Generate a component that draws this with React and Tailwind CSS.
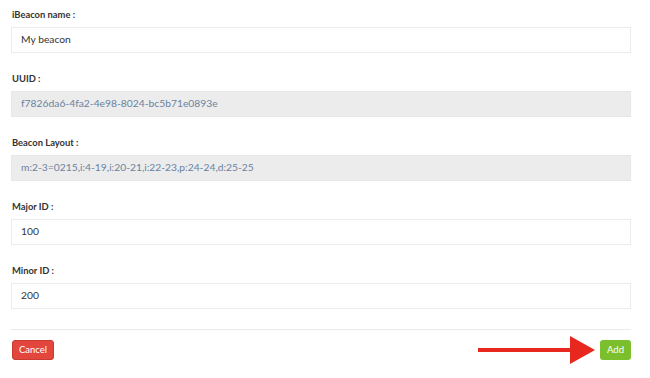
import React from "react"

const fields = [
  { label: "iBeacon name :", value: "My beacon", disabled: false },
  { label: "UUID :", value: "f7826da6-4fa2-4e98-8024-bc5b71e0893e", disabled: true },
  { label: "Beacon Layout :", value: "m:2-3=0215,i:4-19,i:20-21,i:22-23,p:24-24,d:25-25", disabled: true },
  { label: "Major ID :", value: "100", disabled: false },
  { label: "Minor ID :", value: "200", disabled: false },
]

export default function App() {
  return (
    <div className="w-[650px] h-[378px] bg-white px-[11px] font-['Lato','Open_Sans',sans-serif] overflow-hidden">
      <div className="w-[620px]">
        {fields.map((f) => (
          <div key={f.label} className="pt-[8px] mb-[11px]">
            <div className="h-[13px] leading-[13px] text-[9.4px] font-bold text-[#333] pl-px">{f.label}</div>
            <div
              className={
                "mt-[6px] h-[26px] flex items-center px-[9px] text-[10.3px] border " +
                (f.disabled
                  ? "bg-[#ececec] border-[#e6e6e6] text-[#6a82a0]"
                  : "bg-white border-[#ececec] text-[#333]")
              }
            >
              {f.value}
            </div>
          </div>
        ))}

        {/* footer */}
        <div className="mt-[20px] border-t border-[#ebebeb]" />
        <div className="mt-[5px] flex items-center justify-between">
          <button className="ml-px h-[20px] px-[6px] rounded-[3px] bg-[#e2463d] border border-[#c93a32] text-white text-[9.5px] leading-none">
            Cancel
          </button>
          <div className="flex items-center">
            <svg width="120" height="30" viewBox="0 0 120 30" className="mr-[3px]">
              <rect x="1" y="13" width="96" height="4" fill="#e8281f" />
              <polygon points="93,1 118,15 93,29" fill="#e8281f" />
            </svg>
            <button className="h-[20px] px-[7px] rounded-[3px] bg-[#7bbf2c] text-white text-[9.5px] leading-none">
              Add
            </button>
          </div>
        </div>
      </div>
    </div>
  )
}
